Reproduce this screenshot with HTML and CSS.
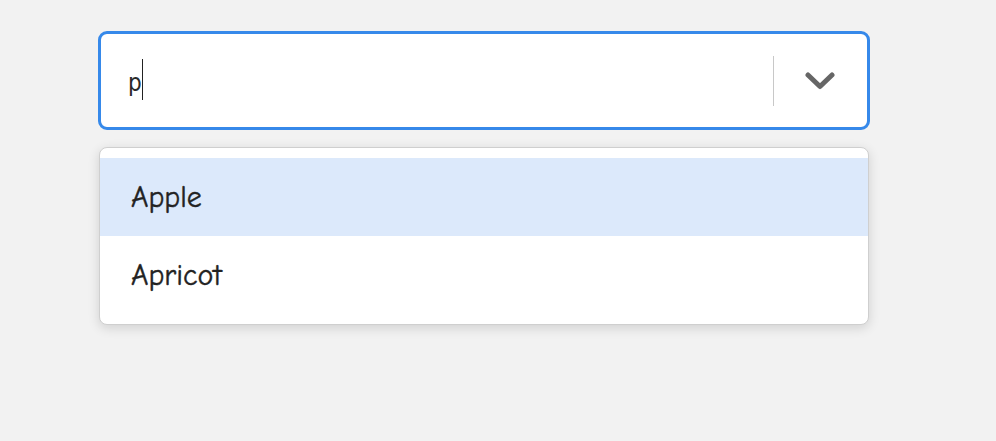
FILE: index.html
```html
<!DOCTYPE html>
<html>
<head>
<meta charset="utf-8">
<link rel="stylesheet" href="styles.css">
</head>
<body>
<div class="wrap">
  <div class="control">
    <div class="value"><span class="typed">p</span><span class="caret"></span></div>
    <div class="indicators">
      <span class="sep"></span>
      <span class="chev">
        <svg width="30" height="20" viewBox="0 0 30 20"><path d="M3 4 L15 15.5 L27 4" fill="none" stroke="#666" stroke-width="5" stroke-linecap="round" stroke-linejoin="round"/></svg>
      </span>
    </div>
  </div>
  <div class="menu">
    <div class="option focused">Apple</div>
    <div class="option">Apricot</div>
  </div>
</div>
</body>
</html>
```
FILE: styles.css
```css
html, body { margin: 0; padding: 0; }
body { background: #f2f2f2; width: 996px; height: 441px; overflow: hidden; }
.wrap { padding: 31px 0 0 98px; width: 772px; }
.control {
  box-sizing: border-box;
  height: 99px;
  border: 3px solid #3689ea;
  border-radius: 9px;
  background: #fff;
  display: flex;
  align-items: center;
}
.value {
  flex: 1;
  padding-left: 27px;
  display: flex;
  align-items: center;
  font-family: "DejaVu Sans Condensed", "DejaVu Sans", sans-serif;
  font-size: 24px;
  color: #2a2a2a;
}
.typed { line-height: 1; position: relative; top: 2px; }
.caret { width: 1px; height: 41px; background: #222; margin-left: 0; margin-top: -2px; }
.indicators { display: flex; align-items: center; height: 100%; }
.sep { width: 1px; height: 50px; background: #c8c8c8; }
.chev { width: 92px; display: flex; justify-content: center; align-items: center; padding-right: 1px; }
.chev svg { display: block; }
.menu {
  margin-top: 17px;
  margin-left: 1px;
  width: 770px;
  box-sizing: border-box;
  background: #fff;
  border: 1px solid #cfcfcf;
  border-radius: 8px;
  box-shadow: 0 3px 12px rgba(0,0,0,0.14);
  padding: 10px 0;
}
.option {
  height: 78px;
  display: flex;
  align-items: center;
  padding-left: 31px;
  font-family: "Comic Sans MS", "Comic Neue", "DejaVu Sans", sans-serif;
  font-size: 30px;
  color: #222;
  -webkit-text-stroke: 0.4px #222;
}
.option.focused { background: #dce9fb; }
```
